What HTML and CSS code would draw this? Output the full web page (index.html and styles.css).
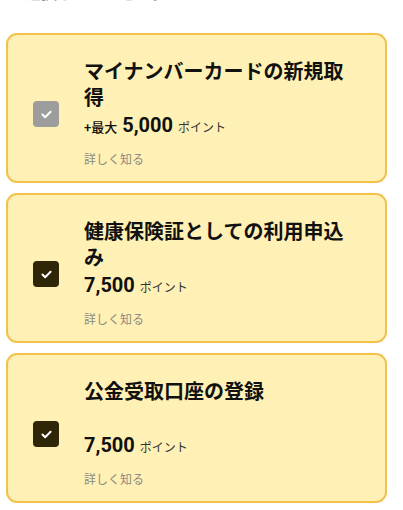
FILE: index.html
```html
<!DOCTYPE html>
<html lang="ja">
<head>
  <meta charset="UTF-8">
  <meta name="viewport" content="width=device-width, initial-scale=1.0">
  <title>ポイント申込</title>
  <link rel="stylesheet" href="styles.css">
</head>
<body>
  <p class="lead">で選択してください。</p>

  <div class="list">
    <!-- 申込済み：グレーのチェック -->
    <div class="card">
      <span class="check done">
        <svg viewBox="0 0 12 10" fill="none" stroke-width="2.2" stroke-linecap="round" stroke-linejoin="round">
          <polyline points="1.5,5 4.5,8 10.5,2"></polyline>
        </svg>
      </span>
      <div class="body">
        <h2 class="title">マイナンバーカードの新規取得</h2>
        <div class="points"><span class="prefix">+最大</span> 5,000 <span class="unit">ポイント</span></div>
        <a class="more" href="#">詳しく知る</a>
      </div>
    </div>

    <div class="card">
      <span class="check">
        <svg viewBox="0 0 12 10" fill="none" stroke-width="2.2" stroke-linecap="round" stroke-linejoin="round">
          <polyline points="1.5,5 4.5,8 10.5,2"></polyline>
        </svg>
      </span>
      <div class="body">
        <h2 class="title">健康保険証としての利用申込み</h2>
        <div class="points">7,500 <span class="unit">ポイント</span></div>
        <a class="more" href="#">詳しく知る</a>
      </div>
    </div>

    <div class="card">
      <span class="check">
        <svg viewBox="0 0 12 10" fill="none" stroke-width="2.2" stroke-linecap="round" stroke-linejoin="round">
          <polyline points="1.5,5 4.5,8 10.5,2"></polyline>
        </svg>
      </span>
      <div class="body">
        <h2 class="title">公金受取口座の登録</h2>
        <div class="points">7,500 <span class="unit">ポイント</span></div>
        <a class="more" href="#">詳しく知る</a>
      </div>
    </div>
  </div>
</body>
</html>
```

FILE: styles.css
```css
body {
  font-family: Roboto, "Noto Sans CJK JP", sans-serif;
  margin: 0;
  padding: 0;
  background-color: #FFFFFF;
  color: #111111;
}
.lead {
  margin: -17px 0 0 9px; /* 上からスクロールされた続きの文 */
  font-size: 16px;
  line-height: 22px;
  color: #8C8C8C;
}
.list {
  display: flex;
  flex-direction: column;
  gap: 10px;
  width: 381px;
  margin: 28px 0 0 6px;
}
.card {
  display: flex;
  align-items: center;
  gap: 25px;
  padding: 24px 36px 12px 25px;
  background-color: #FFF0B5; /* 淡い黄色 */
  border: 2px solid #F2C14E;
  border-radius: 11px;
}
.check {
  flex: none;
  display: flex;
  justify-content: center;
  align-items: center;
  width: 26px;
  height: 26px;
  border-radius: 4px;
  background-color: #2F2608;
  stroke: #FFFFFF;
}
.check.done {
  background-color: #9D9D9D;
}
.check svg {
  width: 11px;
  height: 9px;
}
.body {
  flex: 1;
  min-width: 0;
}
.title {
  margin: 0;
  min-height: 52px;
  font-size: 20px;
  line-height: 26px;
  font-weight: 700;
  color: #111111;
}
.points {
  margin-top: 2px;
  font-size: 20px;
  line-height: 24px;
  height: 24px;
  font-weight: 700;
}
.prefix {
  font-size: 13px;
  font-weight: 500;
  line-height: 1;
}
.unit {
  font-size: 12px;
  font-weight: 400;
  line-height: 1;
  color: #333333;
}
.more {
  display: block;
  margin-top: 14px;
  font-size: 12px;
  line-height: 18px;
  color: #8A8A82;
  text-decoration: none;
}
```
